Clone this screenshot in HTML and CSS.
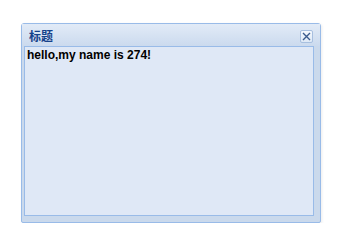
FILE: index.html
```html
<!DOCTYPE html>
<html>
<head>
<meta charset="utf-8">
<link rel="stylesheet" href="styles.css">
</head>
<body>
<div class="stage">
  <div class="window">
    <div class="header">
      <span class="title">标题</span>
      <span class="close" aria-label="close">
        <svg width="9" height="9" viewBox="0 0 9 9"><path d="M1 1 L8 8 M8 1 L1 8" stroke="#3a5a8c" stroke-width="1.4" fill="none"/></svg>
      </span>
    </div>
    <div class="frame">
      <div class="body">hello,my name is 274!</div>
    </div>
  </div>
</div>
</body>
</html>
```
FILE: styles.css
```css
html, body {
  margin: 0;
  padding: 0;
  background: #ffffff;
}
.stage {
  padding: 23px 0 0 21px;
}
.window {
  width: 300px;
  height: 200px;
  box-sizing: border-box;
  border: 1px solid #99bbe8;
  border-radius: 3px 3px 2px 2px;
  background: #cad9ec;
  display: flex;
  flex-direction: column;
  box-shadow: 1px 1px 3px rgba(0,0,0,0.08);
}
.header {
  height: 22px;
  flex: none;
  display: flex;
  align-items: center;
  justify-content: space-between;
  padding: 0 7px 0 7px;
  background: linear-gradient(#e2ebf7, #cbdaee);
}
.title {
  font-family: "Noto Sans CJK SC", sans-serif;
  font-weight: bold;
  font-size: 12px;
  color: #15428b;
  line-height: 12px;
  margin-top: 2px;
}
.close {
  width: 13px;
  height: 13px;
  box-sizing: border-box;
  border: 1px solid #a7bfdf;
  border-radius: 2px;
  background: linear-gradient(#f4f8fd, #dde8f6);
  display: flex;
  align-items: center;
  justify-content: center;
  margin-top: 2px;
}
.frame {
  flex: 1;
  padding: 0 6px 6px 2px;
  display: flex;
}
.body {
  flex: 1;
  border: 1px solid #99bbe8;
  background: #dfe8f6;
  font-family: "Liberation Sans", Arial, sans-serif;
  font-weight: bold;
  font-size: 12px;
  line-height: 14px;
  color: #000;
  padding: 1px 2px;
}
```
